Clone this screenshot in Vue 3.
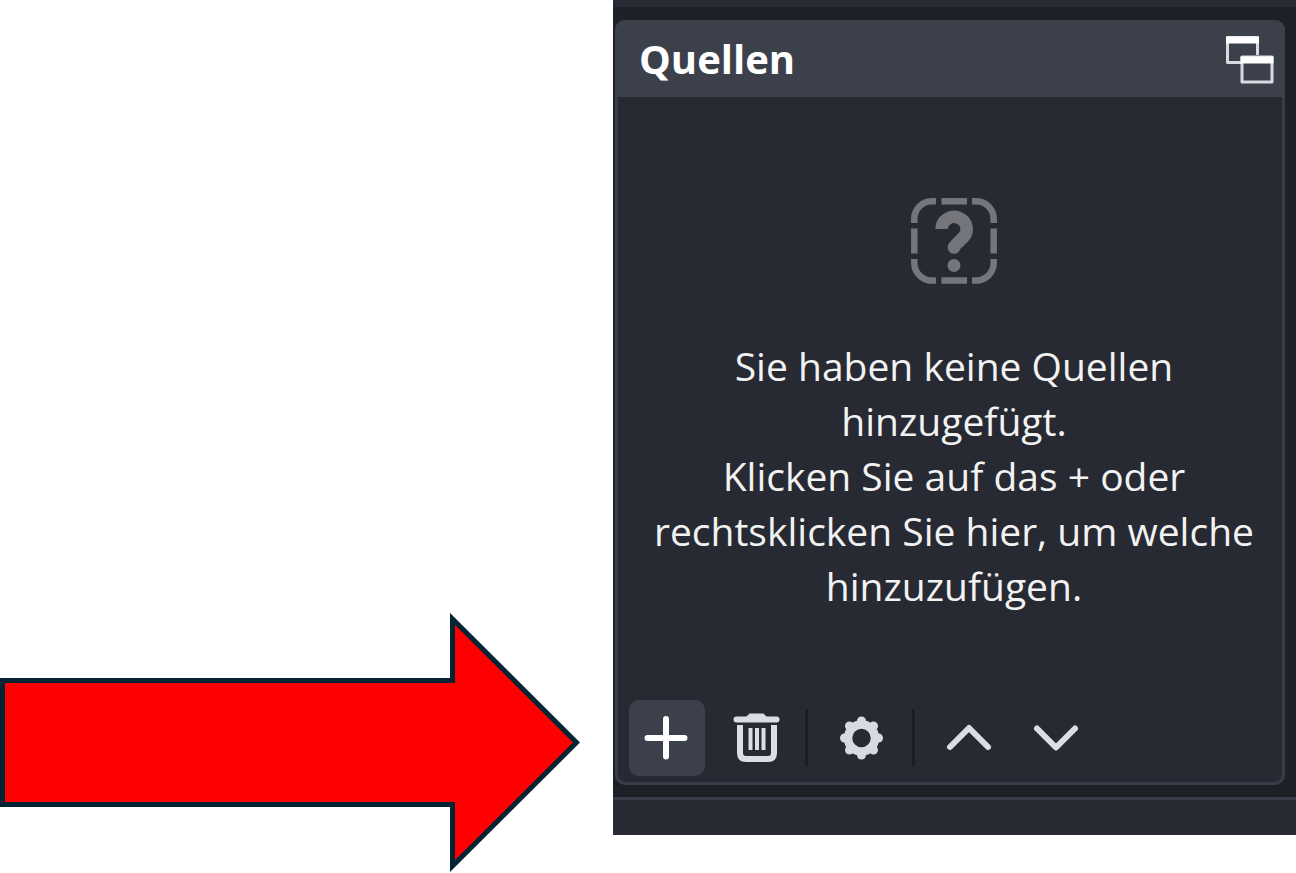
<template>
  <main class="page">
    <div class="pointer">
      <svg viewBox="0 0 580 260" aria-hidden="true">
        <path d="M2.5 67.5H452.5V6L576.5 129.5L452.5 253V191.5H2.5Z" fill="#ff0000" stroke="#042433" stroke-width="5" stroke-miterlimit="10" />
      </svg>
    </div>

    <div class="window">
      <div class="preview-edge"></div>
      <section class="dock" aria-labelledby="dock-title">
        <header class="dock-header">
          <h2 id="dock-title">{{ title }}</h2>
          <button class="float-button" aria-label="Andocken umschalten" @click="floating = !floating">
            <svg width="50" height="50" viewBox="0 0 50 50" fill="none" stroke="#d9dbe1" stroke-width="3">
              <path d="M17 28.500H3.500V3.500H33.500V21" stroke-linejoin="round" />
              <path d="M2 6H35" stroke="#ffffff" stroke-width="7" />
              <rect x="18" y="23" width="30" height="25" stroke-linejoin="round" />
              <path d="M16.500 26H49.500" stroke="#ffffff" stroke-width="7" />
            </svg>
          </button>
        </header>

        <div class="empty">
          <svg class="empty-icon" width="88" height="88" viewBox="0 0 88 88" fill="none" stroke="#75767c">
            <g stroke-width="6.500">
              <path d="M4.300 26V22A17.500 17.500 0 0 1 21.800 4.300H26" />
              <path d="M31.500 4.300H57" />
              <path d="M62 4.300H66.200A17.500 17.500 0 0 1 83.700 22V26" />
              <path d="M83.700 31.500V56.500" />
              <path d="M83.700 62V66A17.500 17.500 0 0 1 66.200 83.500H62" />
              <path d="M57 83.500H31.500" />
              <path d="M26 83.500H21.800A17.500 17.500 0 0 1 4.300 66V62" />
              <path d="M4.300 56.500V31.500" />
            </g>
            <path d="M31.500 32A12.600 12.200 0 1 1 53.200 40.500L47 46.500Q44 49.500 44 50.500" stroke-width="12.500" />
            <circle cx="44" cy="50.500" r="6.300" fill="#75767c" stroke="none" />
            <circle cx="44" cy="68.500" r="6.500" fill="#75767c" stroke="none" />
          </svg>
          <p>Sie haben keine Quellen hinzugefügt.</p>
          <p>Klicken Sie auf das + oder rechtsklicken Sie hier, um welche hinzuzufügen.</p>
        </div>

        <div class="toolbar">
          <button class="tool active" aria-label="Hinzufügen">
            <svg width="50" height="50" viewBox="0 0 50 50" stroke="#ffffff" stroke-width="6" stroke-linecap="round">
              <path d="M24 6V43.500M5.500 25H42.500" />
            </svg>
          </button>
          <button class="tool" aria-label="Entfernen">
            <svg width="50" height="50" viewBox="0 0 50 50" fill="none" stroke="#dcdee6">
              <path d="M6.500 6.500H46.500" stroke-width="6" stroke-linecap="round" />
              <path d="M17.500 4L20 1.500H33L35.500 4Z" fill="#dcdee6" stroke-width="2" />
              <path d="M10 12V40Q10 46 16 46H38Q44 46 44 40V12" stroke-width="6" />
              <path d="M20.500 15V37M27 15V37M33.500 15V37" stroke-width="4" />
            </svg>
          </button>
          <span class="separator"></span>
          <button class="tool" aria-label="Eigenschaften">
            <svg width="50" height="50" viewBox="0 0 50 50" stroke="#d8dae2">
              <circle cx="24.500" cy="25" r="13.500" fill="none" stroke-width="8.500" />
              <path v-for="n in 8" :key="n" d="M24.500 9.500V8" stroke-width="9" stroke-linecap="round" :transform="`rotate(${n * 45} 24.500 25)`" />
            </svg>
          </button>
          <span class="separator"></span>
          <button class="tool" aria-label="Nach oben">
            <svg width="50" height="50" viewBox="0 0 50 50" fill="none" stroke="#dcdee6" stroke-width="6" stroke-linecap="round" stroke-linejoin="round">
              <path d="M6 34L25 15L44 34" />
            </svg>
          </button>
          <button class="tool" aria-label="Nach unten">
            <svg width="50" height="50" viewBox="0 0 50 50" fill="none" stroke="#dcdee6" stroke-width="6" stroke-linecap="round" stroke-linejoin="round">
              <path d="M5 15.500L24 34.500L43 15.500" />
            </svg>
          </button>
        </div>
      </section>
      <footer class="statusbar"></footer>
    </div>
  </main>
</template>

<script setup>
import { ref } from 'vue'

const title = 'Quellen'
const floating = ref(false)
</script>

<style>
body {
  margin: 0;
  background: #ffffff;
}
</style>

<style scoped>
.page {
  display: grid;
  grid-template-columns: 613fr 683fr;
  min-height: 100vh;
  font-family: "Open Sans", "Noto Sans", sans-serif;
}

.pointer {
  align-self: end;
  padding-right: 33px;
}

.pointer svg {
  display: block;
  width: 100%;
}

.window {
  align-self: start;
  background: #1d2027;
}

.preview-edge {
  height: 7px;
  background: #282b34;
}

.dock {
  margin: 13px 11px 12px 2px;
  border: 3px solid #3a3d49;
  border-top: none;
  border-radius: 10px;
  background: #272a33;
}

.dock-header {
  display: flex;
  align-items: center;
  justify-content: space-between;
  height: 77px;
  margin: 0 -3px;
  padding: 0 11px 0 24px;
  border-radius: 10px 10px 0 0;
  background: #3c404b;
}

h2 {
  margin: 0;
  color: #ffffff;
  font-size: 40px;
  font-weight: 700;
  line-height: 55px;
}

button {
  display: flex;
  align-items: center;
  justify-content: center;
  padding: 0;
  border: none;
  background: transparent;
  cursor: pointer;
}

.empty {
  padding: 100px 16px 87px 24px;
  color: #f2f2f2;
  font-size: 39px;
  line-height: 55px;
  text-align: center;
}

.empty-icon {
  display: block;
  margin: 0 auto 53px;
}

.empty p {
  margin: 0;
}

.toolbar {
  display: flex;
  align-items: center;
  gap: 12px;
  padding: 0 11px 6px;
}

.tool {
  width: 76px;
  height: 76px;
  border-radius: 10px;
}

.tool:hover,
.tool.active {
  background: #3c404b;
}

.separator {
  width: 3px;
  height: 58px;
  margin-right: 4px;
  background: #1b1d23;
}

.statusbar {
  height: 35px;
  border-top: 3px solid #3a3d49;
  background: #272a33;
}
</style>
